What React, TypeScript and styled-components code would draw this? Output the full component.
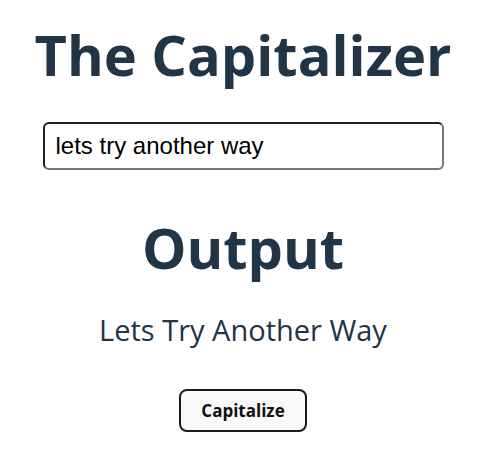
import React, { useState } from "react";
import styled, { createGlobalStyle } from "styled-components";

const Global = createGlobalStyle`
  html, body { margin: 0; padding: 0; background: #ffffff; }
  body { font-family: "Open Sans", "Noto Sans", sans-serif; color: #213547; }
`;

const Page = styled.main`
  box-sizing: border-box;
  width: 481px;
  padding-left: 5px;
  display: flex;
  flex-direction: column;
  align-items: center;
  text-align: center;
`;

const Title = styled.h1<{ $top: number }>`
  margin: ${(p) => p.$top}px 0 0;
  font-size: 56px;
  line-height: 64px;
  font-weight: 700;
  color: #213547;
`;

const Field = styled.input`
  box-sizing: border-box;
  margin-top: 36px;
  width: 401px;
  height: 48px;
  padding: 0 11px;
  border: 2px solid #767676;
  border-top-color: #1f1f1f;
  border-left-color: #1f1f1f;
  border-radius: 6px;
  background: #ffffff;
  font-family: "Liberation Sans", Arial, sans-serif;
  font-size: 24px;
  color: #000000;
  outline: none;
`;

const Result = styled.p`
  margin: 33px 0 0;
  font-size: 29px;
  line-height: 36px;
  font-weight: 400;
  color: #213547;
`;

const Button = styled.button`
  box-sizing: border-box;
  margin-top: 41px;
  width: 128px;
  height: 43px;
  border: 2px solid #1a1a1a;
  border-radius: 8px;
  background: #f9f9f9;
  font-family: "Open Sans", "Noto Sans", sans-serif;
  font-size: 17px;
  font-weight: 700;
  color: #111111;
  cursor: pointer;
`;

const cap = (s: string) =>
  s
    .split(" ")
    .map((w) => (w ? w[0].toUpperCase() + w.slice(1) : w))
    .join(" ");

export default function App() {
  const [text, setText] = useState("lets try another way");
  const [out, setOut] = useState(cap("lets try another way"));
  return (
    <>
      <Global />
      <Page>
        <Title $top={22}>The Capitalizer</Title>
        <Field value={text} onChange={(e) => setText(e.target.value)} />
        <Title $top={45}>Output</Title>
        <Result>{out}</Result>
        <Button onClick={() => setOut(cap(text))}>Capitalize</Button>
      </Page>
    </>
  );
}
